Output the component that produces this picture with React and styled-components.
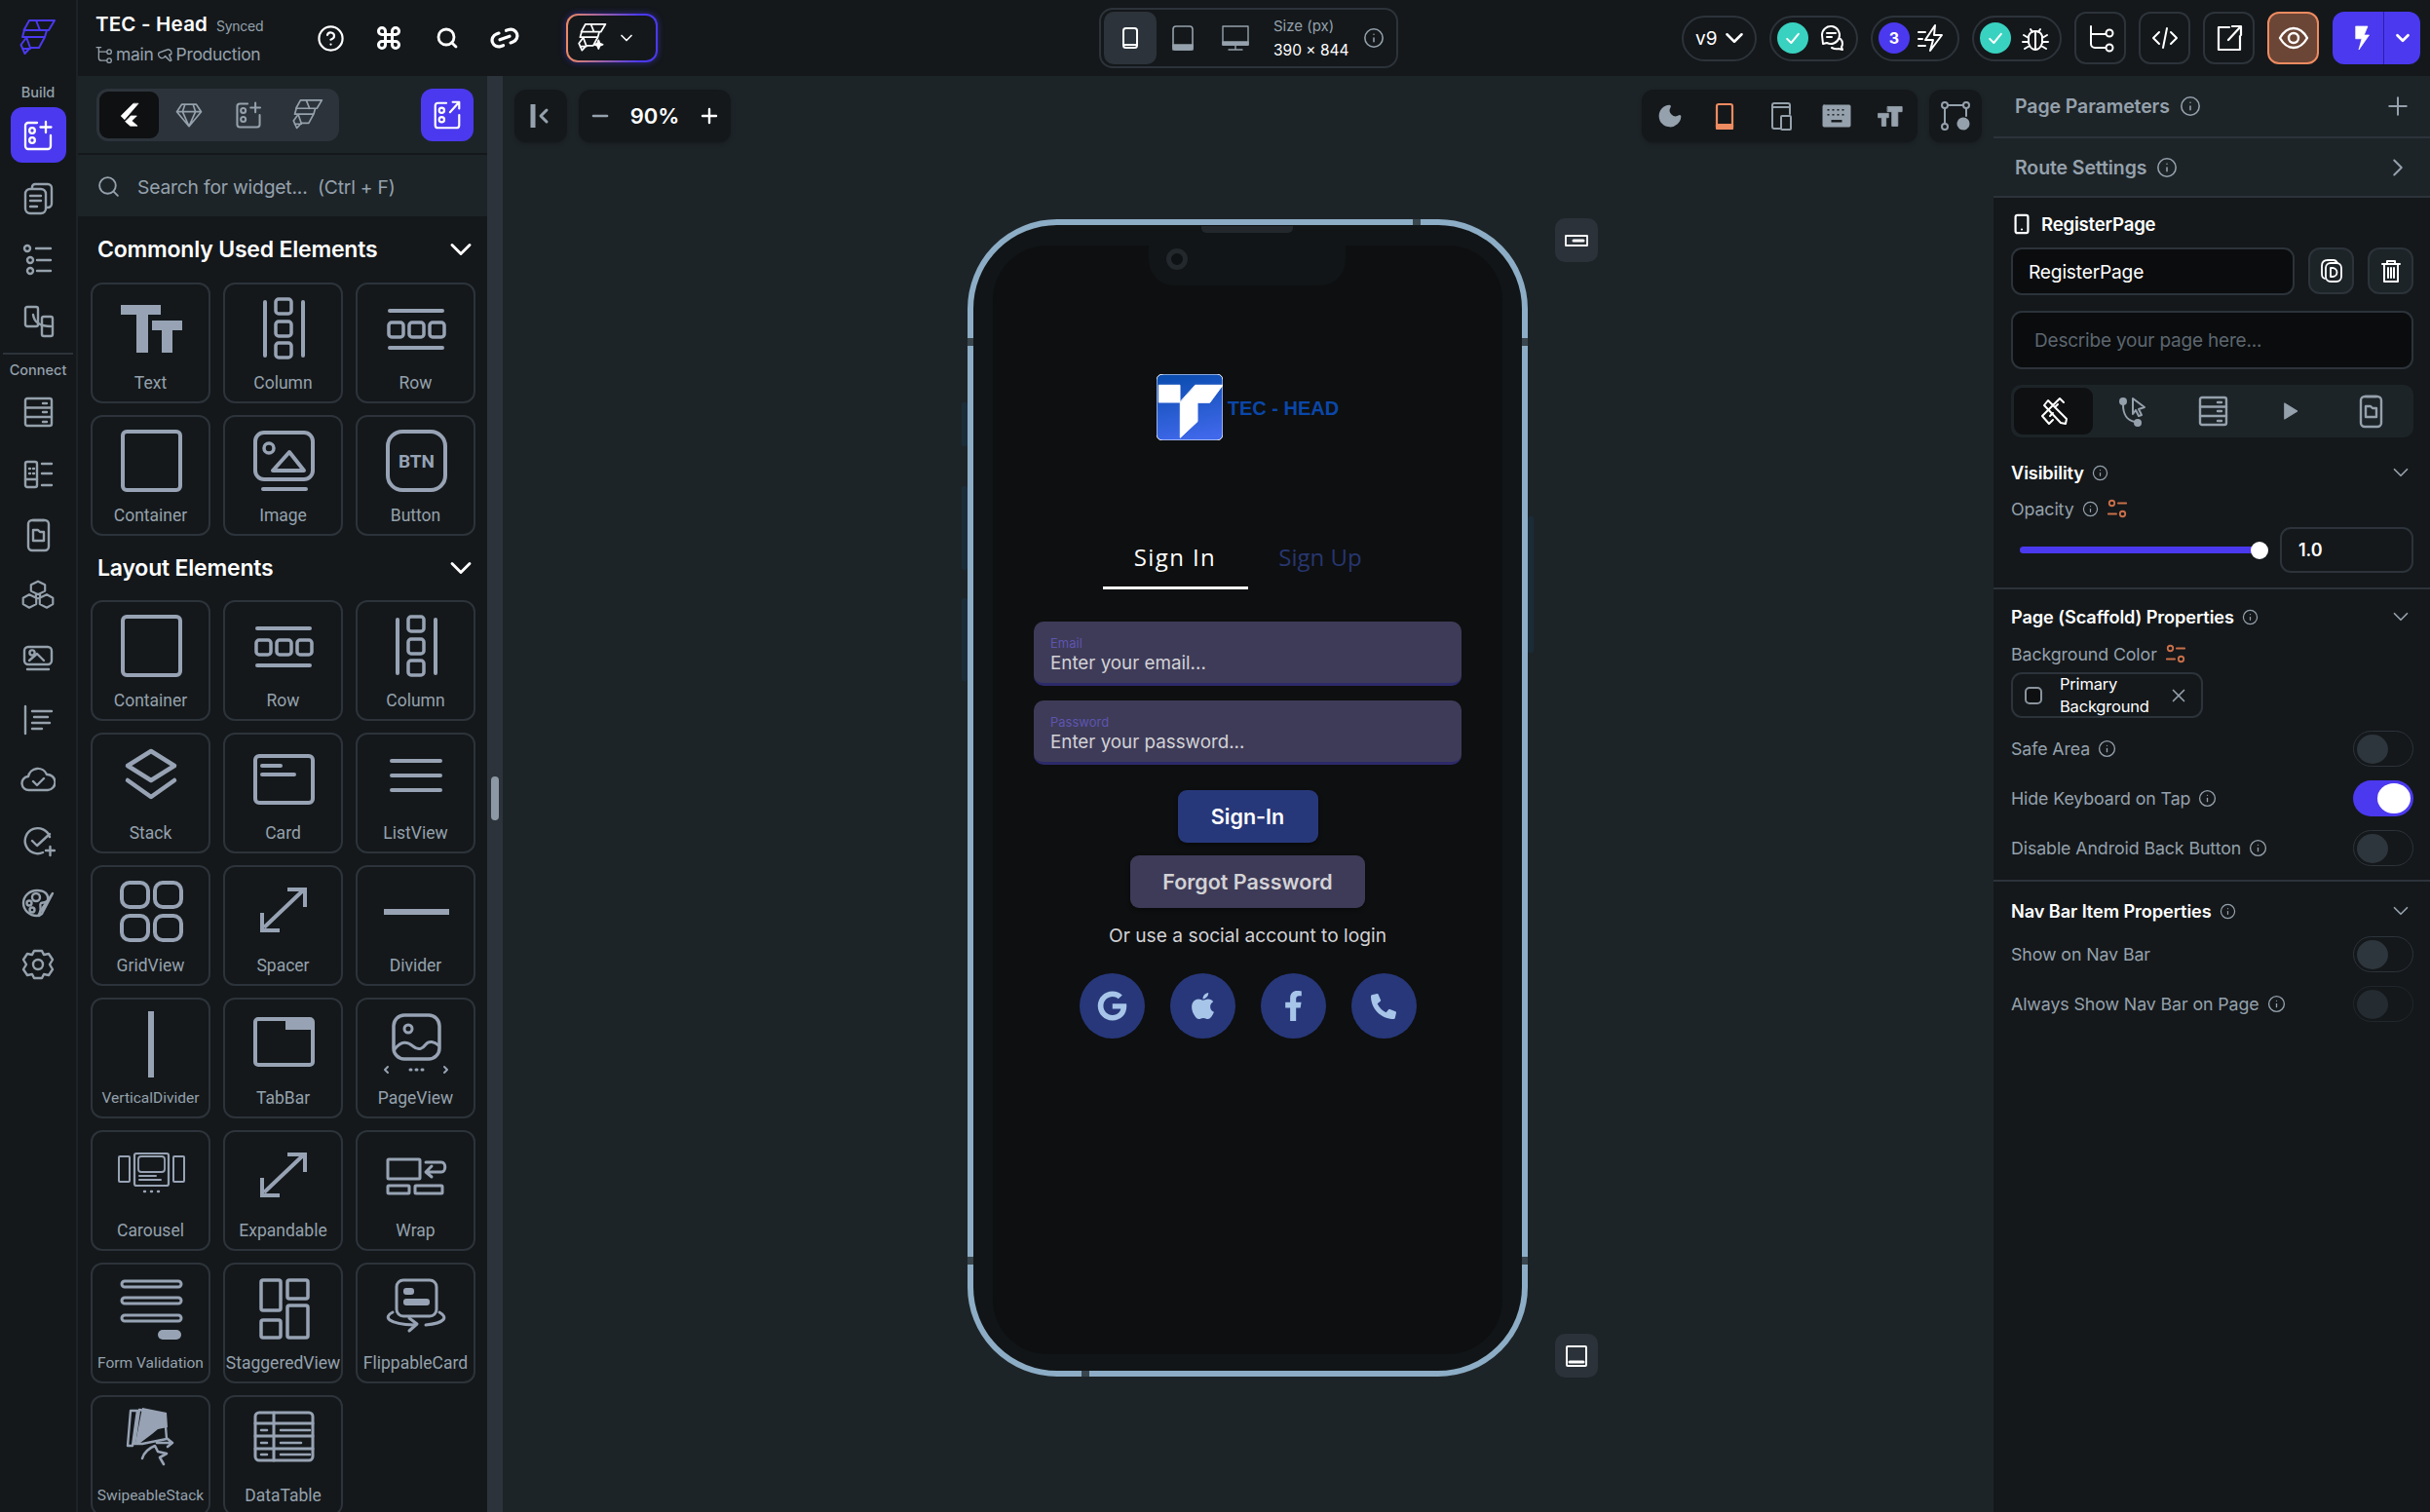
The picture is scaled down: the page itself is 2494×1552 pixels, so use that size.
import React from 'react';
import styled, { createGlobalStyle, css } from 'styled-components';
import {
  ChevronDown, ChevronRight, CircleHelp, Command, Info, Link2, Minus, Moon, Plus, Search, Smartphone, X,
} from 'lucide-react';
import { FaApple, FaFacebookF, FaGoogle, FaPhoneAlt } from 'react-icons/fa';

const BG = '#14181b';
const CANVAS = '#1d2428';
const LINE = '#2c333a';
const GREY = '#95a1ac';
const PURPLE = '#4b39ef';
const ORANGE = '#ee8b60';
const TEAL = '#39d2c0';
const UI = "Inter, 'Noto Sans', sans-serif";

const Global = createGlobalStyle`
  html, body { margin: 0; padding: 0; background: ${BG}; }
  * { box-sizing: border-box; }
`;

const Page = styled.div`
  width: 2494px;
  height: 1552px;
  overflow: hidden;
  display: flex;
  flex-direction: column;
  background: ${BG};
  color: #fff;
  font-family: ${UI};
`;

/* top bar */
const TopBar = styled.header`
  height: 78px;
  flex: none;
  display: grid;
  grid-template-columns: 1128px 307px 1fr;
  align-items: center;
  background: ${BG};
`;
const TopLeft = styled.div`
  display: flex;
  align-items: center;
  height: 100%;
`;
const LogoCell = styled.div`
  width: 80px;
  height: 100%;
  flex: none;
  display: flex;
  align-items: center;
  justify-content: center;
  border-right: 2px solid #1d2226;
`;
const ProjectInfo = styled.div`
  width: 230px;
  flex: none;
  padding-left: 18px;
  display: flex;
  flex-direction: column;
  gap: 8px;
`;
const ProjectTitle = styled.div`
  display: flex;
  align-items: baseline;
  gap: 9px;
  font-size: 20.5px;
  font-weight: 600;
  letter-spacing: 0.2px;
  white-space: nowrap;
`;
const Synced = styled.span`
  font-size: 14px;
  font-weight: 400;
  letter-spacing: -0.3px;
  color: ${GREY};
`;
const BranchRow = styled.div`
  display: flex;
  align-items: center;
  gap: 3px;
  font-size: 17.5px;
  letter-spacing: -0.3px;
  color: ${GREY};
  white-space: nowrap;
`;
const TopIcons = styled.div`
  display: flex;
  align-items: center;
  color: #fff;
`;
const TopIcon = styled.div`
  width: 59.5px;
  display: flex;
  justify-content: center;
`;
const AiButton = styled.div`
  width: 94px;
  height: 50px;
  margin-left: 33px;
  padding-left: 10px;
  display: flex;
  align-items: center;
  gap: 10px;
  border-radius: 12px;
  border: 2px solid transparent;
  background: linear-gradient(${BG}, ${BG}) padding-box,
    linear-gradient(90deg, ${ORANGE}, ${PURPLE} 80%) border-box;
  box-shadow: 0 0 6px rgba(75, 57, 239, 0.55);
`;
const DevicePicker = styled.div`
  width: 307px;
  height: 62px;
  padding: 3px;
  display: flex;
  align-items: center;
  border: 2px solid ${LINE};
  border-radius: 14px;
`;
const DeviceTab = styled.div`
  width: 54px;
  height: 54px;
  flex: none;
  display: flex;
  align-items: center;
  justify-content: center;
  border-radius: 10px;
  color: ${GREY};
  ${(p) => p.$active && css`background: ${LINE}; color: #fff;`}
`;
const SizeInfo = styled.div`
  margin-left: 12px;
  width: 92px;
  display: flex;
  flex-direction: column;
  gap: 6px;
  white-space: nowrap;
`;
const SizeLabel = styled.span`
  font-size: 15px;
  color: ${GREY};
`;
const SizeValue = styled.span`
  font-size: 15.5px;
  font-weight: 400;
`;
const TopRight = styled.div`
  display: flex;
  justify-content: flex-end;
  align-items: center;
  padding-right: 10px;
  gap: 13px;
`;
const Pill = styled.div`
  width: ${(p) => p.$w}px;
  height: 47px;
  display: flex;
  align-items: center;
  justify-content: space-between;
  padding: 0 ${(p) => p.$pr || 10}px 0 ${(p) => p.$pl || 6}px;
  border: 2px solid ${LINE};
  border-radius: 24px;
  font-size: 19px;
  color: #fff;
`;
const PillBadge = styled.span`
  width: 32px;
  height: 32px;
  border-radius: 50%;
  display: flex;
  align-items: center;
  justify-content: center;
  font-size: 16px;
  font-weight: 700;
  background: ${(p) => p.$bg};
`;
const SquareBtn = styled.div`
  width: 53px;
  height: 54px;
  display: flex;
  align-items: center;
  justify-content: center;
  border: 2px solid ${(p) => (p.$active ? ORANGE : LINE)};
  border-radius: 12px;
  background: ${(p) => (p.$active ? '#6b4636' : 'transparent')};
`;
const RunButton = styled.div`
  width: 90px;
  height: 54px;
  margin-left: 1px;
  display: flex;
  align-items: center;
  border-radius: 12px;
  background: ${PURPLE};
`;
const RunPart = styled.div`
  height: 100%;
  display: flex;
  align-items: center;
  justify-content: center;
  width: ${(p) => p.$w}px;
  padding-left: ${(p) => p.$pl || 0}px;
  ${(p) => p.$split && css`border-left: 1px solid #2c1fa8;`}
`;

/* body */
const Body = styled.div`
  flex: 1;
  min-height: 0;
  display: flex;
`;
const Rail = styled.nav`
  width: 80px;
  flex: none;
  display: flex;
  flex-direction: column;
  align-items: center;
  padding-top: 6px;
  color: ${GREY};
  border-right: 2px solid #1d2226;
`;
const RailLabel = styled.div`
  height: 22px;
  line-height: 22px;
  font-size: 14.5px;
  font-weight: 500;
  color: ${GREY};
`;
const RailActive = styled.div`
  width: 57px;
  height: 57px;
  margin: 4px 0 5px;
  display: flex;
  align-items: center;
  justify-content: center;
  border-radius: 12px;
  background: ${PURPLE};
  color: #fff;
`;
const RailItem = styled.div`
  height: 63px;
  flex: none;
  display: flex;
  align-items: center;
  justify-content: center;
`;
const RailLine = styled.div`
  width: 72px;
  height: 2px;
  margin: 1px 0 5px;
  background: ${LINE};
`;

const WidgetPanel = styled.aside`
  width: 420px;
  flex: none;
  display: flex;
  flex-direction: column;
`;
const PanelHead = styled.div`
  height: 81px;
  flex: none;
  display: flex;
  align-items: center;
  justify-content: space-between;
  padding: 0 14px 0 19px;
  background: ${CANVAS};
  border-bottom: 2px solid #14181b;
`;
const KindTabs = styled.div`
  width: 249px;
  height: 54px;
  display: flex;
  align-items: center;
  padding: 3px;
  border-radius: 12px;
  background: ${LINE};
`;
const KindTab = styled.div`
  width: 61px;
  height: 48px;
  flex: none;
  display: flex;
  align-items: center;
  justify-content: center;
  border-radius: 9px;
  color: ${GREY};
  ${(p) => p.$active && css`background: #0e1012; color: #fff;`}
`;
const PurpleBtn = styled.div`
  width: 54px;
  height: 54px;
  display: flex;
  align-items: center;
  justify-content: center;
  border-radius: 12px;
  background: ${PURPLE};
  color: #fff;
`;
const SearchRow = styled.div`
  height: 63px;
  flex: none;
  display: flex;
  align-items: center;
  gap: 17px;
  padding: 2px 0 0 19px;
  background: ${CANVAS};
  color: ${GREY};
  font-size: 19.3px;
  letter-spacing: -0.2px;
  white-space: pre;
`;
const WidgetList = styled.div`
  flex: 1;
  min-height: 0;
  overflow: hidden;
  padding: 0 12px 0 13px;
`;
const SectionHead = styled.div`
  height: ${(p) => p.$h || 68}px;
  display: flex;
  align-items: center;
  justify-content: space-between;
  padding: 0 0 0 7px;
  font-size: 23px;
  font-weight: 600;
  letter-spacing: -0.2px;
`;
const SectionChevron = styled.span`
  display: flex;
  margin-right: -3px;
`;
const WidgetGrid = styled.div`
  display: grid;
  grid-template-columns: repeat(3, 123px);
  grid-auto-rows: 124px;
  column-gap: 13px;
  row-gap: 12px;
`;
const WidgetCard = styled.div`
  display: flex;
  flex-direction: column;
  align-items: center;
  padding-top: 9px;
  border: 2px solid ${LINE};
  border-radius: 12px;
  color: #97a3b4;
`;
const WidgetLabel = styled.span`
  margin-top: 8px;
  height: 24px;
  line-height: 24px;
  font-family: Roboto, sans-serif;
  font-size: ${(p) => (p.$small ? 15.5 : 17.5)}px;
  color: ${GREY};
  white-space: nowrap;
`;
const ScrollTrack = styled.div`
  width: 16px;
  flex: none;
  background: ${LINE};
  padding: 0 4px;
`;
const ScrollThumb = styled.div`
  width: 8px;
  height: 45px;
  margin-top: 719px;
  border-radius: 4px;
  background: #8d98a5;
`;

/* canvas */
const Canvas = styled.main`
  flex: 1;
  min-width: 0;
  padding: 14px 12px 0;
  background: ${CANVAS};
`;
const CanvasTools = styled.div`
  display: flex;
  align-items: center;
  gap: 12px;
  height: 54px;
`;
const FloatBox = styled.div`
  height: 54px;
  width: ${(p) => p.$w}px;
  display: flex;
  align-items: center;
  justify-content: ${(p) => p.$justify || 'center'};
  padding: 0 ${(p) => p.$pad || 0}px;
  border-radius: 12px;
  background: ${BG};
  box-shadow: 0 2px 4px rgba(0, 0, 0, 0.25);
  color: ${GREY};
`;
const ZoomValue = styled.span`
  font-size: 22px;
  font-weight: 600;
  color: #fff;
`;
const Spacer = styled.div`
  flex: 1;
`;
const Phone = styled.div`
  position: relative;
  width: 575px;
  height: 1188px;
  margin: 79px 0 0 465px;
  padding: 21px 20px 17px;
  border: 6px solid #8cadc5;
  border-radius: 92px;
  background: #111517;
`;
const FrameBreak = styled.i`
  position: absolute;
  background: #3a464e;
  ${(p) => p.$css}
`;
const SideKey = styled.i`
  position: absolute;
  width: 6px;
  top: ${(p) => p.$top}px;
  height: ${(p) => p.$h}px;
  border-radius: 2px;
  background: #1a2c38;
  ${(p) => (p.$right ? 'right: -12px;' : 'left: -12px;')}
`;
const Speaker = styled.i`
  position: absolute;
  top: 1px;
  left: 234px;
  width: 94px;
  height: 7px;
  border-radius: 0 0 5px 5px;
  background: #22282c;
`;
const Notch = styled.div`
  position: absolute;
  top: 21px;
  left: 180px;
  width: 202px;
  height: 41px;
  border-radius: 0 0 26px 26px;
  background: #111517;
`;
const Camera = styled.i`
  position: absolute;
  top: 3px;
  left: 18px;
  width: 22px;
  height: 22px;
  border-radius: 50%;
  border: 5px solid #22282c;
  background: #0e1214;
`;
const Screen = styled.div`
  height: 100%;
  display: flex;
  flex-direction: column;
  align-items: center;
  padding-top: 132px;
  border-radius: 56px;
  background: #0e0f10;
`;
const Brand = styled.div`
  display: flex;
  align-items: center;
  gap: 5px;
  height: 68px;
`;
const BrandName = styled.span`
  margin-top: 2px;
  font-family: 'Liberation Sans', sans-serif;
  font-size: 20px;
  font-weight: 700;
  color: #0a47a9;
  white-space: pre;
`;
const AuthTabs = styled.div`
  display: flex;
  margin-top: 88px;
`;
const AuthTab = styled.div`
  width: 149px;
  height: 65px;
  display: flex;
  align-items: center;
  justify-content: center;
  font-family: 'Open Sans', sans-serif;
  font-size: 24px;
  letter-spacing: ${(p) => (p.$active ? 1.4 : 0)}px;
  color: ${(p) => (p.$active ? '#fff' : '#27366f')};
  border-bottom: 3px solid ${(p) => (p.$active ? '#fff' : 'transparent')};
`;
const Field = styled.div`
  width: 439px;
  height: 66px;
  margin-top: ${(p) => p.$mt}px;
  padding: 14px 17px 0;
  border-radius: 10px;
  border-bottom: 3px solid #2d2a6a;
  background: #3e3b58;
`;
const FieldLabel = styled.div`
  height: 16px;
  line-height: 16px;
  font-size: 13px;
  color: #5d55b0;
`;
const FieldValue = styled.div`
  margin-top: 1px;
  line-height: 24px;
  font-size: 18.8px;
  color: #d2d2d6;
`;
const AppButton = styled.div`
  width: ${(p) => p.$w}px;
  height: 54px;
  margin-top: ${(p) => p.$mt}px;
  display: flex;
  align-items: center;
  justify-content: center;
  border-radius: 9px;
  font-size: 21.5px;
  font-weight: 600;
  background: ${(p) => p.$bg};
  color: ${(p) => p.$color};
  box-shadow: 0 2px 4px rgba(0, 0, 0, 0.4);
`;
const SocialNote = styled.div`
  margin-top: 14px;
  height: 28px;
  line-height: 28px;
  font-size: 19.2px;
  color: #d2d2d6;
`;
const SocialRow = styled.div`
  margin-top: 25px;
  display: flex;
  gap: 26px;
`;
const SocialBtn = styled.div`
  width: 67px;
  height: 67px;
  display: flex;
  align-items: center;
  justify-content: center;
  border-radius: 50%;
  background: #27377a;
  color: #a7c5e8;
`;
const SideTool = styled.div`
  position: absolute;
  right: -78px;
  ${(p) => p.$pos}
  width: 44px;
  height: 45px;
  display: flex;
  align-items: center;
  justify-content: center;
  border-radius: 10px;
  background: #2b3239;
  color: #fff;
`;

/* properties */
const Props = styled.aside`
  width: 448px;
  flex: none;
  background: ${BG};
`;
const CollapseRow = styled.div`
  height: ${(p) => p.$h}px;
  display: flex;
  align-items: center;
  justify-content: space-between;
  padding: 0 18px 0 22px;
  background: ${CANVAS};
  border-bottom: 2px solid ${LINE};
  font-size: 19.5px;
  font-weight: 600;
  letter-spacing: -0.1px;
  color: ${GREY};
`;
const InlineLabel = styled.div`
  display: flex;
  align-items: center;
  gap: ${(p) => p.$gap || 8}px;
  white-space: nowrap;
`;
const PageBlock = styled.div`
  padding: 14px 17px 0 18px;
`;
const PageTitle = styled.div`
  height: 26px;
  display: flex;
  align-items: center;
  gap: 9px;
  font-size: 18.6px;
  font-weight: 600;
  letter-spacing: -0.2px;
`;
const NameRow = styled.div`
  margin-top: 11px;
  display: flex;
  gap: 14px;
`;
const NameInput = styled.div`
  width: 292px;
  height: 49px;
  display: flex;
  align-items: center;
  padding-left: 16px;
  border: 2px solid ${LINE};
  border-radius: 11px;
  background: #0a0c0e;
  font-size: 19.2px;
  letter-spacing: -0.2px;
`;
const NameBtn = styled.div`
  width: 47px;
  height: 48px;
  display: flex;
  align-items: center;
  justify-content: center;
  border: 2px solid ${LINE};
  border-radius: 12px;
  background: ${CANVAS};
  color: #fff;
`;
const Describe = styled.div`
  height: 60px;
  margin-top: 16px;
  display: flex;
  align-items: center;
  padding-left: 22px;
  border: 2px solid ${LINE};
  border-radius: 11px;
  background: #0a0c0e;
  font-size: 19px;
  letter-spacing: -0.2px;
  color: #5d666e;
`;
const PropTabs = styled.div`
  height: 54px;
  margin-top: 16px;
  padding: 3px;
  display: flex;
  align-items: center;
  border-radius: 10px;
  background: ${CANVAS};
`;
const PropTab = styled.div`
  flex: 1;
  height: 48px;
  display: flex;
  align-items: center;
  justify-content: center;
  border-radius: 9px;
  color: ${GREY};
  ${(p) => p.$active && css`background: #0e1012; color: #fff;`}
`;
const PropSection = styled.section`
  padding: ${(p) => p.$pt}px 17px ${(p) => p.$pb}px 18px;
  border-bottom: ${(p) => (p.$last ? 'none' : `2px solid ${LINE}`)};
`;
const PropHead = styled.div`
  height: 28px;
  display: flex;
  align-items: center;
  justify-content: space-between;
  font-size: 18.2px;
  font-weight: 600;
  letter-spacing: -0.1px;
`;
const PropRow = styled.div`
  min-height: ${(p) => p.$h || 24}px;
  margin-top: ${(p) => p.$mt}px;
  display: flex;
  align-items: center;
  justify-content: space-between;
  font-size: 17.8px;
  letter-spacing: -0.1px;
  color: ${GREY};
`;
const SliderTrack = styled.div`
  position: relative;
  width: 252px;
  height: 7px;
  margin-left: 9px;
  border-radius: 4px;
  background: ${PURPLE};
`;
const SliderThumb = styled.i`
  position: absolute;
  right: -3px;
  top: -5px;
  width: 18px;
  height: 18px;
  border-radius: 50%;
  background: #fff;
`;
const ValueBox = styled.div`
  width: 137px;
  height: 47px;
  display: flex;
  align-items: center;
  padding-left: 17px;
  border: 2px solid ${LINE};
  border-radius: 11px;
  font-size: 18px;
  font-weight: 600;
  color: #fff;
`;
const ColorChip = styled.div`
  width: 197px;
  height: 47px;
  margin-top: 7px;
  display: flex;
  align-items: center;
  padding: 0 12px 0 12px;
  border: 2px solid ${LINE};
  border-radius: 11px;
  color: ${GREY};
`;
const Swatch = styled.i`
  width: 18px;
  height: 18px;
  flex: none;
  border: 2px solid #8a949e;
  border-radius: 5px;
  background: #0e0f10;
`;
const ChipText = styled.span`
  flex: 1;
  padding-left: 18px;
  font-size: 16.5px;
  line-height: 23px;
  letter-spacing: -0.2px;
  color: #fff;
`;
const Toggle = styled.div`
  width: 62px;
  height: 37px;
  flex: none;
  padding: 3px;
  display: flex;
  justify-content: ${(p) => (p.$on ? 'flex-end' : 'flex-start')};
  border-radius: 19px;
  border: ${(p) => (p.$on ? 'none' : `1px solid ${p.$dim ? '#20272c' : LINE}`)};
  background: ${(p) => (p.$on ? PURPLE : 'transparent')};
`;
const Knob = styled.i`
  width: ${(p) => (p.$on ? 34 : 32)}px;
  height: ${(p) => (p.$on ? 31 : 30)}px;
  border-radius: 50%;
  background: ${(p) => (p.$on ? '#fff' : p.$dim ? '#242b31' : '#2e363d')};
`;
const Svg = styled.svg`
  flex: none;
  display: block;
  fill: none;
  stroke: currentColor;
  stroke-linecap: round;
  stroke-linejoin: round;
`;

const D = ({ s = 36, vb = 36, w = 2.4, color, children }) => (
  <Svg width={s} height={s} viewBox={`0 0 ${vb} ${vb}`} strokeWidth={w} style={color ? { color } : undefined}>
    {children}
  </Svg>
);

/* brand + misc drawings */
const FlowLogo = ({ s = 38, color = PURPLE, w = 2, magic }) => (
  <D s={s} vb={38} w={w} color={color}>
    <path d="M10 1h26l-6 10H4.500zM17 1l4 10M5 11h23l-2 7H3zM7 18l4 11h9l6-11M6 20l-4.500 6 4 9 5.500-6M3 30h8" />
    {magic && <path d="M27 22l1.500 4 4 1.500-4 1.500-1.500 4-1.500-4-4-1.500 4-1.500z" fill="currentColor" />}
  </D>
);
const WidgetAdd = ({ s = 36, arrow }) => (
  <D s={s} w={2.3}>
    <path d="M17 5H8a3 3 0 0 0-3 3v21a3 3 0 0 0 3 3h20a3 3 0 0 0 3-3V18" />
    <circle cx="12" cy="13" r="2.8" />
    <circle cx="12" cy="23" r="2.8" />
    {arrow
      ? <path d="M21 15L31 4M24 4h7v7" />
      : <path d="M26 4v11M20.5 9.5h11" />}
  </D>
);
const BranchIcon = ({ s = 18 }) => (
  <D s={s} vb={32} w={2.4}>
    <path d="M6 3v19a5 5 0 0 0 5 5h9M6 11h14" />
    <path d="M2 3h8" />
    <circle cx="25" cy="11" r="4" />
    <circle cx="25" cy="27" r="4" />
  </D>
);
const Sliders = ({ s = 22 }) => (
  <D s={s} vb={24} w={2} color="#c96f49">
    <circle cx="6" cy="6" r="3" /><path d="M13 6h9M2 18h9" /><circle cx="18" cy="18" r="3" />
  </D>
);
const InfoI = ({ s = 17, color = GREY }) => <Info size={s} color={color} strokeWidth={1.7} />;

const RailIcons = {
  pages: <D><rect x="5" y="8" width="21" height="25" rx="5" /><path d="M12 7V6a3 3 0 0 1 3-3h13a4 4 0 0 1 4 4v16a4 4 0 0 1-4 4h-1M10 15h11M10 20h11M10 26h7" /></D>,
  tree: <D><circle cx="7" cy="6" r="3" /><circle cx="10" cy="18" r="3" /><circle cx="10" cy="29" r="3" /><path d="M16 6h15M17 18h14M17 29h14" /></D>,
  flow: <D><rect x="5" y="3" width="13" height="20" rx="2" /><rect x="22" y="13" width="11" height="20" rx="2" /><path d="M13 11c1 8 8 12 18 12" /></D>,
  db: <D><rect x="5" y="4" width="27" height="28" rx="2" /><path d="M5 13.5h27M5 23h27M23 9h4M23 18h4M23 28h4" /></D>,
  api: <D><rect x="5" y="6" width="12" height="26" rx="2" /><path d="M9 13h1M13 13h1M9 18h1M13 18h1M22 8h10M22 18h10M22 30h10M5 24h12" /></D>,
  file: <D><rect x="8" y="3" width="21" height="31" rx="4" /><path d="M13 3h11M13 13h5l2 2h4v9H13z" /></D>,
  nodes: <D vb={40}><path d="M20 3l8 4v7l-8 4-8-4V7zM10 18l8 4v7l-8 4-7-4v-7zM30 18l7 4v7l-7 4-8-4v-7z" /><circle cx="20" cy="20" r="2.5" /></D>,
  media: <D><rect x="4" y="7" width="28" height="18" rx="4" /><circle cx="12" cy="13" r="2.6" /><path d="M9 21l8-7 7 7M7 30h22" /></D>,
  text: <D><path d="M5 5v28M12 10h20M14 16h14M12 22h18M12 28h10" /></D>,
  cloud: <D><path d="M9 28a7 7 0 0 1-1-14 10 10 0 0 1 19-2 8 8 0 0 1 1 16zM13 19l4 4 7-7" /></D>,
  test: <D><path d="M30 13A13 13 0 1 0 23 29M12 17l5 5 13-12M26 27h9M30.5 23v9" /></D>,
  theme: <D><path d="M17 31C9 31 3 25 3 18S9 5 17 5s12 4 11 10c-1 3-5 2-7 3-2 2 1 5-1 10-1 2-2 3-3 3z" /><circle cx="16" cy="12" r="4" /><circle cx="9" cy="18" r="2.5" /><circle cx="12" cy="25" r="2.5" /><path d="M33 8L22 29l-3 2 1-4z" /></D>,
  gear: <D><path d="M14 4h8l2 4 5-1 4 6-3 5 3 5-4 6-5-1-2 4h-8l-2-4-5 1-4-6 3-5-3-5 4-6 5 1z" /><circle cx="18" cy="18" r="5" /></D>,
};

const WG = ({ children, fill }) => (
  <Svg width="72" height="72" viewBox="0 0 72 72" strokeWidth="4" fill={fill}>{children}</Svg>
);
const ArrowsGlyph = () => <WG><path d="M16 53L56 15M40 14h18v18M32 56H14V38" strokeLinecap="butt" strokeLinejoin="miter" /></WG>;
const ContainerGlyph = () => <WG><rect x="7" y="6" width="59" height="60" rx="4" /></WG>;
const RowGlyph = () => <WG><path d="M9 18h54M9 56h54" /><rect x="8" y="30" width="15" height="15" rx="3" strokeWidth="3.5" /><rect x="29" y="30" width="15" height="15" rx="3" strokeWidth="3.5" /><rect x="50" y="30" width="15" height="15" rx="3" strokeWidth="3.5" /></WG>;
const ColumnGlyph = () => <WG><path d="M17 9v55M56 9v55" /><rect x="28" y="6" width="16" height="15" rx="3" strokeWidth="3.5" /><rect x="28" y="29" width="16" height="15" rx="3" strokeWidth="3.5" /><rect x="28" y="51" width="16" height="15" rx="3" strokeWidth="3.5" /></WG>;
const BtnText = styled.text`
  font-family: Roboto, sans-serif;
  font-weight: 700;
  font-size: 19px;
  fill: currentColor;
  stroke: none;
`;

const Glyphs = {
  Text: <WG><path d="M5 12h41v10H33v39H21V22H5z" fill="currentColor" stroke="none" /><path d="M37 28h31v10H58v23H47V38H37z" fill="currentColor" stroke="none" /></WG>,
  Column: <ColumnGlyph />,
  Row: <RowGlyph />,
  Container: <ContainerGlyph />,
  Image: <WG><rect x="7" y="7" width="59" height="48" rx="9" /><circle cx="21" cy="23" r="5" strokeWidth="3.5" /><path d="M25 46l17-19 15 19z" /><path d="M15 65h44" /></WG>,
  Button: <WG><rect x="7" y="6" width="59" height="60" rx="15" /><BtnText x="36.5" y="43" textAnchor="middle">BTN</BtnText></WG>,
  Stack: <WG><path d="M36 8l24 15-24 15-24-15zM12 38l24 17 24-17" strokeWidth="4.500" /></WG>,
  Card: <WG><rect x="7" y="13" width="59" height="48" rx="4" /><path d="M14 23h19M14 32h33" /></WG>,
  ListView: <WG><path d="M11 18h50M11 33h50M11 48h50" /></WG>,
  GridView: <WG><rect x="6" y="7" width="27" height="25" rx="8" /><rect x="40" y="7" width="27" height="25" rx="8" /><rect x="6" y="41" width="27" height="25" rx="8" /><rect x="40" y="41" width="27" height="25" rx="8" /></WG>,
  Spacer: <ArrowsGlyph />,
  Divider: <WG><path d="M3 37h67" strokeWidth="6" strokeLinecap="butt" /></WG>,
  VerticalDivider: <WG><path d="M36 3v68" strokeWidth="6" strokeLinecap="butt" /></WG>,
  TabBar: <WG><rect x="7" y="11" width="59" height="47" rx="3" /><path d="M38 10h28v12H38z" fill="currentColor" stroke="none" /></WG>,
  PageView: <WG><rect x="13" y="7" width="47" height="45" rx="11" strokeWidth="3.5" /><circle cx="28" cy="21" r="4" strokeWidth="3" /><path d="M14 42c7-9 13-8 19-3s10 2 13-2 9-3 13 1" strokeWidth="3" /><path d="M7 60l-3 3 3 3M65 60l3 3-3 3" strokeWidth="2" /><path d="M30 63h1M36 63h1M42 63h1" strokeWidth="3" /></WG>,
  Carousel: <WG><rect x="3" y="16" width="11" height="26" rx="1" strokeWidth="2" /><rect x="59" y="16" width="11" height="26" rx="1" strokeWidth="2" /><rect x="19" y="13" width="35" height="33" rx="2" strokeWidth="2.2" /><rect x="23" y="16" width="27" height="16" rx="3" strokeWidth="1.8" /><path d="M24 36h17M24 40h22" strokeWidth="2" /><path d="M29 52h1M36 52h1M43 52h1" strokeWidth="2.4" /></WG>,
  Expandable: <ArrowsGlyph />,
  Wrap: <WG><rect x="7" y="19" width="33" height="20" rx="1" strokeWidth="3" /><rect x="7" y="46" width="22" height="8" rx="1" strokeWidth="3" /><rect x="35" y="46" width="28" height="8" rx="1" strokeWidth="3" /><path d="M46 22h16c5 0 5 10 0 10H47M52 26l-6 6 6 5" strokeWidth="3" /></WG>,
  'Form Validation': <WG><rect x="6" y="8" width="61" height="6" rx="3" strokeWidth="3" /><rect x="6" y="25" width="61" height="6" rx="3" strokeWidth="3" /><rect x="6" y="43" width="61" height="6" rx="3" strokeWidth="3" /><rect x="43" y="58" width="24" height="10" rx="5" fill="currentColor" stroke="none" /></WG>,
  StaggeredView: <WG><rect x="13" y="7" width="20" height="31" rx="2" strokeWidth="3.5" /><rect x="40" y="7" width="21" height="19" rx="2" strokeWidth="3.5" /><rect x="13" y="48" width="20" height="18" rx="2" strokeWidth="3.5" /><rect x="40" y="33" width="21" height="33" rx="2" strokeWidth="3.5" /></WG>,
  FlippableCard: <WG><rect x="16" y="7" width="41" height="37" rx="7" strokeWidth="3" /><rect x="23" y="15" width="11" height="7" rx="3" fill="currentColor" stroke="none" /><rect x="23" y="26" width="27" height="7" rx="3" fill="currentColor" stroke="none" /><path d="M12 40c-10 5-5 12 22 13M60 40c9 5 6 11-14 13M29 46l8 6-8 7" strokeWidth="3" /></WG>,
  SwipeableStack: <WG><path d="M15 5h7l-5 36h-5zM24 4l26 5 2 25-25 5-8 0z" strokeWidth="2.4" /><path d="M27 2l25 5 1 15-10 2-6 5-12 9-5 0z" fill="currentColor" stroke="none" /><path d="M27 54c2-7 8-11 13-13l3 6 9 2-7 4 4 7M42 38h16M53 34l5 4-5 4" strokeWidth="2.6" /></WG>,
  DataTable: <WG><rect x="7" y="7" width="59" height="49" rx="4" strokeWidth="3" /><path d="M7 18h59M7 31h59M7 44h59M26 7v49" strokeWidth="3" /><path d="M13 25h6M13 38h6M13 50h6M33 38h21M33 50h30M33 25h30" strokeWidth="2.5" /></WG>,
};

const common = [
  ['Text'], ['Column'], ['Row'], ['Container'], ['Image'], ['Button'],
];
const layout = [
  ['Container'], ['Row'], ['Column'], ['Stack'], ['Card'], ['ListView'], ['GridView'], ['Spacer'], ['Divider'],
  ['VerticalDivider', true], ['TabBar'], ['PageView'], ['Carousel'], ['Expandable'], ['Wrap'],
  ['Form Validation', true], ['StaggeredView'], ['FlippableCard'], ['SwipeableStack', true], ['DataTable'],
];

const Widgets = ({ items }) => (
  <WidgetGrid>
    {items.map(([name, small]) => (
      <WidgetCard key={name}>
        {Glyphs[name]}
        <WidgetLabel $small={small}>{name}</WidgetLabel>
      </WidgetCard>
    ))}
  </WidgetGrid>
);

const BrandMark = () => (
  <Svg width="68" height="68" viewBox="0 0 68 68" stroke="none">
    <defs>
      <linearGradient id="tec" x1="0.3" y1="0" x2="0.5" y2="1">
        <stop offset="0" stopColor="#0b4db0" />
        <stop offset="1" stopColor="#3f68ea" />
      </linearGradient>
    </defs>
    <rect width="68" height="68" rx="6" fill="url(#tec)" />
    <path d="M2.700 11.300H24V29H2.700zM40 11.300h28L54.700 29.300H42v19.400L24.300 65.300V28.700z" fill="#fff" />
  </Svg>
);

const Toolbar = () => (
  <TopBar>
    <TopLeft>
      <LogoCell><FlowLogo /></LogoCell>
      <ProjectInfo>
        <ProjectTitle>TEC - Head <Synced>Synced</Synced></ProjectTitle>
        <BranchRow>
          <BranchIcon />
          main
          <D s={17} vb={24} w={2}><path d="M14 6a5 5 0 0 1 7 6l-3 1 3 8-2 1-7-7a5 5 0 0 1-9-5z" /></D>
          Production
        </BranchRow>
      </ProjectInfo>
      <TopIcons>
        <TopIcon><CircleHelp size={29} strokeWidth={1.8} /></TopIcon>
        <TopIcon><Command size={28} strokeWidth={2.6} /></TopIcon>
        <TopIcon><Search size={24} strokeWidth={2.8} /></TopIcon>
        <TopIcon><Link2 size={32} strokeWidth={2.4} transform="rotate(-20)" /></TopIcon>
      </TopIcons>
      <AiButton>
        <FlowLogo s={30} color="#fff" w={2.2} magic />
        <ChevronDown size={20} color="#fff" />
      </AiButton>
    </TopLeft>
    <DevicePicker>
      <DeviceTab $active>
        <D s={24} vb={24} w={2}><rect x="5" y="2" width="14" height="20" rx="2.5" /><path d="M5 19h14" /></D>
      </DeviceTab>
      <DeviceTab>
        <D s={28} vb={28} w={1.6}><rect x="4" y="2" width="20" height="24" rx="3" /><path d="M4 21h20v5H4z" fill="currentColor" /></D>
      </DeviceTab>
      <DeviceTab>
        <D s={30} vb={30} w={1.4}><rect x="2" y="3" width="26" height="19" /><path d="M2 19h26v3H2z" fill="currentColor" /><path d="M15 22v4M8 27h14" /></D>
      </DeviceTab>
      <SizeInfo>
        <SizeLabel>Size (px)</SizeLabel>
        <SizeValue>390 × 844</SizeValue>
      </SizeInfo>
      <InfoI s={22} />
    </DevicePicker>
    <TopRight>
      <Pill $w={77} $pl={12} $pr={6}>v9<ChevronDown size={30} color="#fff" strokeWidth={2} /></Pill>
      <Pill $w={91}>
        <PillBadge $bg={TEAL}><D s={20} vb={24} w={2.4} color="#fff"><path d="M5 13l5 5 9-11" /></D></PillBadge>
        <D s={30} vb={30} w={2} color="#fff"><path d="M5 12a9 9 0 1 1 5 8l-4 1zM10 10h9M10 14h5M24 16c3 3 2 7 1 8l1 3-4-1c-3 1-5 0-7-1" /></D>
      </Pill>
      <Pill $w={91}>
        <PillBadge $bg={PURPLE}>3</PillBadge>
        <D s={32} vb={32} w={2} color="#fff"><path d="M19 3L9 18h8l-3 11 12-16h-8zM2 10h7M2 17h4M2 24h7" /></D>
      </Pill>
      <Pill $w={92}>
        <PillBadge $bg={TEAL}><D s={20} vb={24} w={2.4} color="#fff"><path d="M5 13l5 5 9-11" /></D></PillBadge>
        <D s={30} vb={30} w={2} color="#fff"><path d="M10 6l2 3M20 6l-2 3M8 13c1-3 4-5 7-5s6 2 7 5v7c-1 4-4 7-7 7s-6-3-7-7zM15 8v19M3 12l5 3M27 12l-5 3M2 19h6M28 19h-6M4 26l5-3M26 26l-5-3" /></D>
      </Pill>
      <SquareBtn><D s={32} vb={32} w={2} color="#fff"><path d="M6 4v18a4 4 0 0 0 4 4h11M6 12h15" /><circle cx="25" cy="11" r="3.5" /><circle cx="25" cy="26" r="3.5" /></D></SquareBtn>
      <SquareBtn><D s={28} vb={28} w={2} color="#fff"><path d="M8 8l-6 6 6 6M20 8l6 6-6 6M16 4l-4 20" /></D></SquareBtn>
      <SquareBtn><D s={32} vb={32} w={2.2} color="#fff"><path d="M16 5H5v23h22V14M15 18L27 5M19 4h9v9" /></D></SquareBtn>
      <SquareBtn $active><D s={32} vb={32} w={2.4} color="#fff"><path d="M2 16c4-7 9-10 14-10s10 3 14 10c-4 7-9 10-14 10S6 23 2 16z" /><circle cx="16" cy="16" r="5" /></D></SquareBtn>
      <RunButton>
        <RunPart $w={52} $pl={8}><Svg width="18" height="30" viewBox="0 0 24 34" stroke="none"><path d="M4 1h16l-5 12h7L8 33l4-15H4z" fill="#fff" /></Svg></RunPart>
        <RunPart $w={38} $split><ChevronDown size={22} color="#fff" strokeWidth={3} /></RunPart>
      </RunButton>
    </TopRight>
  </TopBar>
);

const RailNav = () => (
  <Rail>
    <RailLabel>Build</RailLabel>
    <RailActive><WidgetAdd /></RailActive>
    <RailItem>{RailIcons.pages}</RailItem>
    <RailItem>{RailIcons.tree}</RailItem>
    <RailItem>{RailIcons.flow}</RailItem>
    <RailLine />
    <RailLabel>Connect</RailLabel>
    {['db', 'api', 'file', 'nodes', 'media', 'text', 'cloud', 'test', 'theme', 'gear'].map((k) => (
      <RailItem key={k}>{RailIcons[k]}</RailItem>
    ))}
  </Rail>
);

const WidgetSidebar = () => (
  <WidgetPanel>
    <PanelHead>
      <KindTabs>
        <KindTab $active>
          <Svg width="22" height="27" viewBox="0 0 30 36" stroke="none"><path d="M20 3L3 20l5 5L27 3zM14 23l-5 5 7 6h10l-8-7 7-7H17z" fill="#fff" /></Svg>
        </KindTab>
        <KindTab><D s={30} w={2}><path d="M9 5h18l6 9-15 18L3 14zM3 14h30M13 5l-3 9 8 18 8-18-3-9" /></D></KindTab>
        <KindTab><WidgetAdd s={32} /></KindTab>
        <KindTab><FlowLogo s={32} color={GREY} /></KindTab>
      </KindTabs>
      <PurpleBtn><WidgetAdd s={34} arrow /></PurpleBtn>
    </PanelHead>
    <SearchRow>
      <Search size={25} strokeWidth={1.8} />
      {'Search for widget...  (Ctrl + F)'}
    </SearchRow>
    <WidgetList>
      <SectionHead>Commonly Used Elements<SectionChevron><ChevronDown size={36} strokeWidth={1.9} /></SectionChevron></SectionHead>
      <Widgets items={common} />
      <SectionHead $h={66}>Layout Elements<SectionChevron><ChevronDown size={36} strokeWidth={1.9} /></SectionChevron></SectionHead>
      <Widgets items={layout} />
    </WidgetList>
  </WidgetPanel>
);

const PhonePreview = () => (
  <Phone>
    <FrameBreak $css="top:-6px;left:451px;width:8px;height:6px;" />
    <FrameBreak $css="top:116px;left:-6px;width:6px;height:8px;" />
    <FrameBreak $css="top:116px;right:-6px;width:6px;height:8px;" />
    <FrameBreak $css="bottom:109px;left:-6px;width:6px;height:8px;" />
    <FrameBreak $css="bottom:109px;right:-6px;width:6px;height:8px;" />
    <FrameBreak $css="bottom:-6px;left:111px;width:8px;height:6px;" />
    <SideKey $top={182} $h={45} />
    <SideKey $top={268} $h={86} />
    <SideKey $top={383} $h={85} />
    <SideKey $right $top={299} $h={140} />
    <Speaker />
    <Notch><Camera /></Notch>
    <Screen>
      <Brand>
        <BrandMark />
        <BrandName>{'TEC - HEAD'}</BrandName>
      </Brand>
      <AuthTabs>
        <AuthTab $active>Sign In</AuthTab>
        <AuthTab>Sign Up</AuthTab>
      </AuthTabs>
      <Field $mt={33}>
        <FieldLabel>Email</FieldLabel>
        <FieldValue>Enter your email...</FieldValue>
      </Field>
      <Field $mt={15}>
        <FieldLabel>Password</FieldLabel>
        <FieldValue>Enter your password...</FieldValue>
      </Field>
      <AppButton $w={144} $mt={26} $bg="#27387a" $color="#fff">Sign-In</AppButton>
      <AppButton $w={241} $mt={13} $bg="#3e3b58" $color="#d2d2d6">Forgot Password</AppButton>
      <SocialNote>Or use a social account to login</SocialNote>
      <SocialRow>
        <SocialBtn><FaGoogle size={31} /></SocialBtn>
        <SocialBtn><FaApple size={31} /></SocialBtn>
        <SocialBtn><FaFacebookF size={31} /></SocialBtn>
        <SocialBtn><FaPhoneAlt size={26} /></SocialBtn>
      </SocialRow>
    </Screen>
    <SideTool $pos="top: -7px;">
      <D s={26} vb={26} w={1.8} color="#fff"><rect x="2" y="8" width="22" height="10" /><path d="M10 13h10" strokeWidth="3" /></D>
    </SideTool>
    <SideTool $pos="bottom: -7px;">
      <D s={26} vb={26} w={2} color="#fff"><rect x="3" y="3" width="20" height="20" rx="1" /><path d="M6 19h14" strokeWidth="3" /></D>
    </SideTool>
  </Phone>
);

const CanvasArea = () => (
  <Canvas>
    <CanvasTools>
      <FloatBox $w={54}>
        <D s={32} vb={32} w={3}><path d="M8 4v24" strokeWidth="5" strokeLinecap="butt" /><path d="M22 10l-6 6 6 6" /></D>
      </FloatBox>
      <FloatBox $w={156} $justify="space-between" $pad={10}>
        <Minus size={24} strokeWidth={2.6} />
        <ZoomValue>90%</ZoomValue>
        <Plus size={24} color="#fff" strokeWidth={2.4} />
      </FloatBox>
      <Spacer />
      <FloatBox $w={283} $justify="space-between" $pad={15}>
        <Moon size={28} fill="currentColor" strokeWidth={1.5} />
        <D s={30} vb={30} w={2.2} color={ORANGE}><rect x="7" y="3" width="16" height="25" rx="2" /><path d="M7 24h16v4H7z" fill="currentColor" /></D>
        <D s={32} vb={32} w={2}><path d="M15 29H9a2 2 0 0 1-2-2V5a2 2 0 0 1 2-2h14a2 2 0 0 1 2 2v9M7 7h18" /><rect x="16" y="16" width="10" height="14" rx="1" /></D>
        <Svg width="30" height="28" viewBox="0 0 30 28" stroke="none"><path fillRule="evenodd" d="M2 3h26a1 1 0 0 1 1 1v20a1 1 0 0 1-1 1H2a1 1 0 0 1-1-1V4a1 1 0 0 1 1-1zm3 4v2h3V7zm5 0v2h3V7zm5 0v2h3V7zm5 0v2h3V7zM5 12v2h3v-2zm5 0v2h3v-2zm5 0v2h3v-2zm5 0v2h3v-2zM9 18v3h12v-3z" fill="currentColor" /></Svg>
        <Svg width="26" height="26" viewBox="0 0 30 30" stroke="none"><path d="M12 4h17v6h-5v17h-7V10h-5zM1 12h12v5H10v10H5V17H1z" fill="currentColor" /></Svg>
      </FloatBox>
      <FloatBox $w={54}>
        <D s={34} vb={34} w={2}><circle cx="6" cy="6" r="3" /><circle cx="28" cy="6" r="3" /><circle cx="6" cy="28" r="3" /><path d="M9 6h16M6 9v16M28 9v8" /><circle cx="25" cy="25" r="5" fill="currentColor" strokeDasharray="3 1.5" strokeWidth="3" /></D>
      </FloatBox>
    </CanvasTools>
    <PhonePreview />
  </Canvas>
);

const PropertiesPanel = () => (
  <Props>
    <CollapseRow $h={64}>
      <InlineLabel $gap={10}>Page Parameters <InfoI s={22} /></InlineLabel>
      <Plus size={30} strokeWidth={1.6} />
    </CollapseRow>
    <CollapseRow $h={61}>
      <InlineLabel $gap={10}>Route Settings <InfoI s={22} /></InlineLabel>
      <ChevronRight size={30} strokeWidth={1.6} />
    </CollapseRow>
    <PageBlock>
      <PageTitle><Smartphone size={22} strokeWidth={2.4} />RegisterPage</PageTitle>
      <NameRow>
        <NameInput>RegisterPage</NameInput>
        <NameBtn>
          <D s={26} vb={26} w={1.8}><rect x="7" y="5" width="16" height="19" rx="5" /><path d="M6 21c-3-1-3-3-3-6V8c0-4 2-6 6-6h6c2 0 3 1 4 3M12 10v9h2a4.500 4.500 0 0 0 0-9z" /></D>
        </NameBtn>
        <NameBtn>
          <D s={26} vb={26} w={2}><path d="M4 6h18M9 6V3h8v3M6 6v18h14V6M10 10v10M13 10v10M16 10v10" /></D>
        </NameBtn>
      </NameRow>
      <Describe>Describe your page here...</Describe>
      <PropTabs>
        <PropTab $active>
          <D s={32} vb={32} w={2}><path d="M6 10l4-5 19 19-1 5-5-1zM26 7l-4-4L4 21l7 8 4-4M8 17l3-3M12 21l3-3M17 12l3-3" /></D>
        </PropTab>
        <PropTab>
          <D s={32} vb={32} w={2}><circle cx="6" cy="6" r="3" fill="currentColor" /><circle cx="21" cy="28" r="3" fill="currentColor" /><path d="M6 9c0 10 3 16 12 18M16 3l12 9-6 2 3 6-3 1-3-6-3 4z" /></D>
        </PropTab>
        <PropTab>{RailIcons.db}</PropTab>
        <PropTab>
          <Svg width="24" height="30" viewBox="0 0 24 30" stroke="none"><path d="M5 7l13 8L5 23z" fill="currentColor" /></Svg>
        </PropTab>
        <PropTab>{RailIcons.file}</PropTab>
      </PropTabs>
    </PageBlock>
    <PropSection $pt={22} $pb={15}>
      <PropHead>
        <InlineLabel>Visibility <InfoI /></InlineLabel>
        <ChevronDown size={26} color={GREY} strokeWidth={1.6} />
      </PropHead>
      <PropRow $mt={11}>
        <InlineLabel>Opacity <InfoI /><Sliders /></InlineLabel>
      </PropRow>
      <PropRow $mt={7} $h={47}>
        <SliderTrack><SliderThumb /></SliderTrack>
        <ValueBox>1.0</ValueBox>
      </PropRow>
    </PropSection>
    <PropSection $pt={14} $pb={14}>
      <PropHead>
        <InlineLabel>Page (Scaffold) Properties <InfoI /></InlineLabel>
        <ChevronDown size={26} color={GREY} strokeWidth={1.6} />
      </PropHead>
      <PropRow $mt={12}><InlineLabel>Background Color <Sliders /></InlineLabel></PropRow>
      <ColorChip>
        <Swatch />
        <ChipText>Primary Background</ChipText>
        <X size={22} strokeWidth={1.8} />
      </ColorChip>
      <PropRow $mt={13} $h={37}><InlineLabel>Safe Area <InfoI s={19} /></InlineLabel><Toggle><Knob /></Toggle></PropRow>
      <PropRow $mt={14} $h={37}><InlineLabel>Hide Keyboard on Tap <InfoI s={19} /></InlineLabel><Toggle $on><Knob $on /></Toggle></PropRow>
      <PropRow $mt={14} $h={37}><InlineLabel>Disable Android Back Button <InfoI s={19} /></InlineLabel><Toggle><Knob /></Toggle></PropRow>
    </PropSection>
    <PropSection $pt={16} $pb={0} $last>
      <PropHead>
        <InlineLabel>Nav Bar Item Properties <InfoI /></InlineLabel>
        <ChevronDown size={26} color={GREY} strokeWidth={1.6} />
      </PropHead>
      <PropRow $mt={12} $h={37}>Show on Nav Bar<Toggle><Knob /></Toggle></PropRow>
      <PropRow $mt={14} $h={37}><InlineLabel>Always Show Nav Bar on Page <InfoI s={19} /></InlineLabel><Toggle $dim><Knob $dim /></Toggle></PropRow>
    </PropSection>
  </Props>
);

export default function App() {
  return (
    <Page>
      <Global />
      <Toolbar />
      <Body>
        <RailNav />
        <WidgetSidebar />
        <ScrollTrack><ScrollThumb /></ScrollTrack>
        <CanvasArea />
        <PropertiesPanel />
      </Body>
    </Page>
  );
}
